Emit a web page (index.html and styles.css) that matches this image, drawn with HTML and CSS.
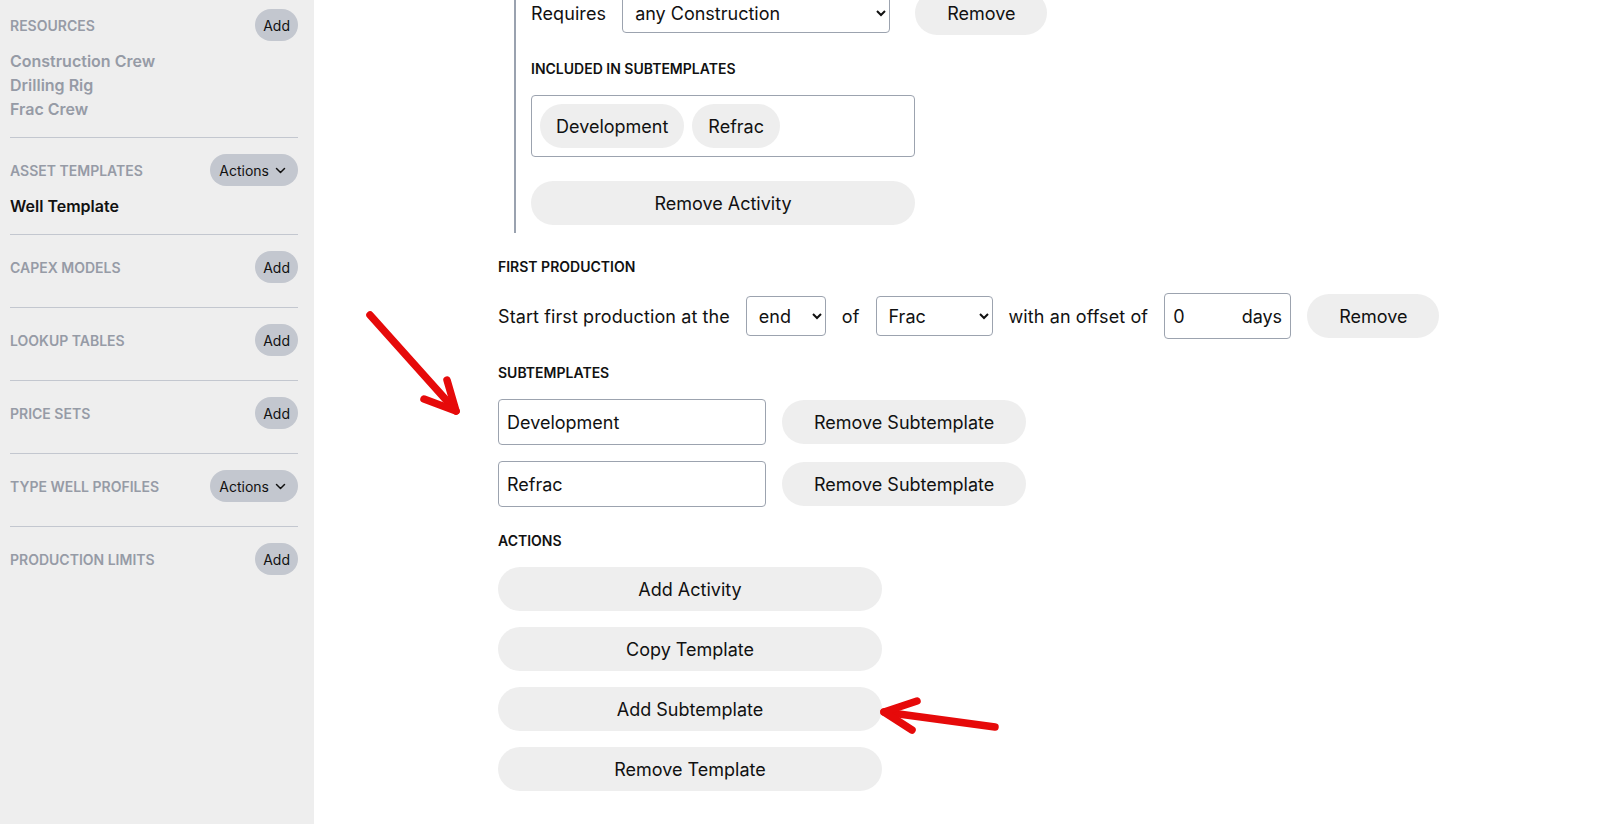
FILE: index.html
```html
<!DOCTYPE html>
<html lang="en">
<head>
<meta charset="utf-8">
<title>Asset Templates</title>
<link rel="stylesheet" href="styles.css">
</head>
<body>
<div class="app">
  <aside class="sidebar">
    <section class="side-section first">
      <div class="side-head"><span class="side-title">Resources</span><button class="pill">Add</button></div>
      <ul class="side-list">
        <li>Construction Crew</li>
        <li>Drilling Rig</li>
        <li>Frac Crew</li>
      </ul>
    </section>
    <section class="side-section">
      <div class="side-head"><span class="side-title">Asset Templates</span><button class="pill pill-menu">Actions <svg class="chev" width="11" height="7" viewBox="0 0 11 7"><path d="M1.5 1.5l4 4 4-4" fill="none" stroke="#111" stroke-width="1.5" stroke-linecap="round" stroke-linejoin="round"/></svg></button></div>
      <ul class="side-list">
        <li class="active">Well Template</li>
      </ul>
    </section>
    <section class="side-section">
      <div class="side-head"><span class="side-title">Capex Models</span><button class="pill">Add</button></div>
      <ul class="side-list"></ul>
    </section>
    <section class="side-section">
      <div class="side-head"><span class="side-title">Lookup Tables</span><button class="pill">Add</button></div>
      <ul class="side-list"></ul>
    </section>
    <section class="side-section">
      <div class="side-head"><span class="side-title">Price Sets</span><button class="pill">Add</button></div>
      <ul class="side-list"></ul>
    </section>
    <section class="side-section">
      <div class="side-head"><span class="side-title">Type Well Profiles</span><button class="pill pill-menu">Actions <svg class="chev" width="11" height="7" viewBox="0 0 11 7"><path d="M1.5 1.5l4 4 4-4" fill="none" stroke="#111" stroke-width="1.5" stroke-linecap="round" stroke-linejoin="round"/></svg></button></div>
      <ul class="side-list"></ul>
    </section>
    <section class="side-section last">
      <div class="side-head"><span class="side-title">Production Limits</span><button class="pill">Add</button></div>
      <ul class="side-list"></ul>
    </section>
  </aside>

  <main class="main">
    <div class="content">
      <div class="activity">
        <div class="row requires-row">
          <span class="row-text">Requires</span>
          <select class="select select-wide"><option>any Construction</option></select>
          <button class="btn btn-remove shift">Remove</button>
        </div>
        <h3 class="label">Included in subtemplates</h3>
        <div class="chip-box">
          <span class="chip">Development</span>
          <span class="chip">Refrac</span>
        </div>
        <button class="btn btn-block btn-gap">Remove Activity</button>
      </div>

      <h3 class="label">First production</h3>
      <div class="row prod-row">
        <span class="row-text">Start first production at the</span>
        <select class="select select-end"><option>end</option></select>
        <span class="row-text">of</span>
        <select class="select select-frac"><option>Frac</option></select>
        <span class="row-text">with an offset of</span>
        <label class="offset"><input class="offset-input" type="text" value="0"><span class="unit">days</span></label>
        <button class="btn btn-remove">Remove</button>
      </div>

      <h3 class="label">Subtemplates</h3>
      <div class="sub-list">
        <div class="row">
          <input class="text-input" type="text" value="Development">
          <button class="btn btn-remove">Remove Subtemplate</button>
        </div>
        <div class="row">
          <input class="text-input" type="text" value="Refrac">
          <button class="btn btn-remove">Remove Subtemplate</button>
        </div>
      </div>

      <h3 class="label">Actions</h3>
      <div class="action-list">
        <button class="btn btn-block">Add Activity</button>
        <button class="btn btn-block">Copy Template</button>
        <button class="btn btn-block">Add Subtemplate</button>
        <button class="btn btn-block">Remove Template</button>
      </div>
    </div>
  </main>

  <svg class="annotations" width="1602" height="824" viewBox="0 0 1602 824">
    <g fill="none" stroke="#e60a0a" stroke-width="7.5" stroke-linecap="round" stroke-linejoin="round">
      <path d="M370 315 L456 411"/>
      <path d="M447 380 L456 411 L424 399"/>
      <path d="M995 727 L884 712"/>
      <path d="M917 701 L884 712 L912 730"/>
    </g>
  </svg>
</div>
</body>
</html>
```

FILE: styles.css
```css
* { box-sizing: border-box; }

html, body {
  margin: 0;
  padding: 0;
  height: 100%;
  overflow: hidden;
  background: #ffffff;
  font-family: Inter, "Noto Sans", "Liberation Sans", sans-serif;
  color: #111111;
}

.app {
  position: relative;
  display: flex;
  height: 824px;
}

/* Sidebar */
.sidebar {
  width: 314px;
  flex: 0 0 314px;
  background: #eeeeee;
  padding: 0 16px 0 10px;
}

.side-section {
  padding: 16px 0;
  border-bottom: 1px solid #c3c7cf;
}
.side-section.first { padding-top: 9px; }
.side-section.last { border-bottom: none; }

.side-head {
  display: flex;
  align-items: center;
  justify-content: space-between;
  height: 32px;
}

.side-title {
  font-size: 14px;
  font-weight: 600;
  text-transform: uppercase;
  color: #969ba6;
}

.pill {
  height: 32px;
  padding: 0 8px;
  border: none;
  border-radius: 16px;
  background: #c3c7cf;
  font-family: inherit;
  font-size: 14px;
  color: #111111;
  display: flex;
  align-items: center;
}
.pill-menu {
  padding: 0 12px 0 9px;
  gap: 6px;
}
.chev { display: block; margin-top: 1px; }

.side-list {
  list-style: none;
  margin: 8px 0 0;
  padding: 0;
}
.side-list li {
  font-size: 16px;
  font-weight: 600;
  line-height: 24px;
  color: #969ba6;
}
.side-list li.active { color: #111111; }

/* Main */
.main {
  flex: 1;
  min-width: 0;
  overflow: hidden;
}

.content {
  margin-top: -9px;
  padding-left: 184px;
}

.activity {
  margin-left: 16px;
  border-left: 2px solid #9aa2af;
  padding: 0 0 8px 15px;
  width: 600px;
}

.row {
  display: flex;
  align-items: center;
  gap: 16px;
}
.row > * { flex-shrink: 0; }

.row-text {
  font-size: 18px;
  line-height: 27px;
  letter-spacing: 0.1px;
  white-space: nowrap;
}

.label {
  margin: 24px 0 16px;
  font-size: 14px;
  line-height: 20px;
  font-weight: 600;
  text-transform: uppercase;
  color: #111111;
}

.select {
  height: 40px;
  border: 1px solid #9ca3af;
  border-radius: 4px;
  background: #ffffff;
  font-family: inherit;
  font-size: 18px;
  color: #111111;
  padding: 0 6px 0 8px;
}
.select-wide { width: 268px; }
.select-end { width: 80px; }
.select-frac { width: 117px; }

.btn {
  height: 44px;
  border: none;
  border-radius: 22px;
  background: #eeeeee;
  font-family: inherit;
  font-size: 18px;
  color: #111111;
  padding: 0 32px;
  white-space: nowrap;
}
.btn-block {
  display: block;
  width: 384px;
  padding: 0;
}
.btn-gap { margin-top: 24px; }
.shift { margin-left: 9px; }

.chip-box {
  width: 384px;
  border: 1px solid #9ca3af;
  border-radius: 4px;
  padding: 8px;
  display: flex;
  gap: 8px;
}
.chip {
  height: 44px;
  padding: 0 16px;
  border-radius: 22px;
  background: #eeeeee;
  font-size: 18px;
  display: flex;
  align-items: center;
}

.offset {
  width: 127px;
  height: 46px;
  border: 1px solid #9ca3af;
  border-radius: 4px;
  padding: 0 8px;
  display: flex;
  align-items: center;
  font-size: 18px;
}
.offset-input {
  flex: 1;
  min-width: 0;
  border: none;
  outline: none;
  padding: 0;
  font-family: inherit;
  font-size: 18px;
  color: #111111;
  background: transparent;
}
.unit { font-size: 18px; }

.sub-list {
  display: flex;
  flex-direction: column;
  gap: 16px;
}

.text-input {
  width: 268px;
  height: 46px;
  border: 1px solid #9ca3af;
  border-radius: 4px;
  padding: 0 8px;
  font-family: inherit;
  font-size: 18px;
  color: #111111;
}

.action-list {
  display: flex;
  flex-direction: column;
  gap: 16px;
}

.annotations {
  position: absolute;
  left: 0;
  top: 0;
  pointer-events: none;
}
```
